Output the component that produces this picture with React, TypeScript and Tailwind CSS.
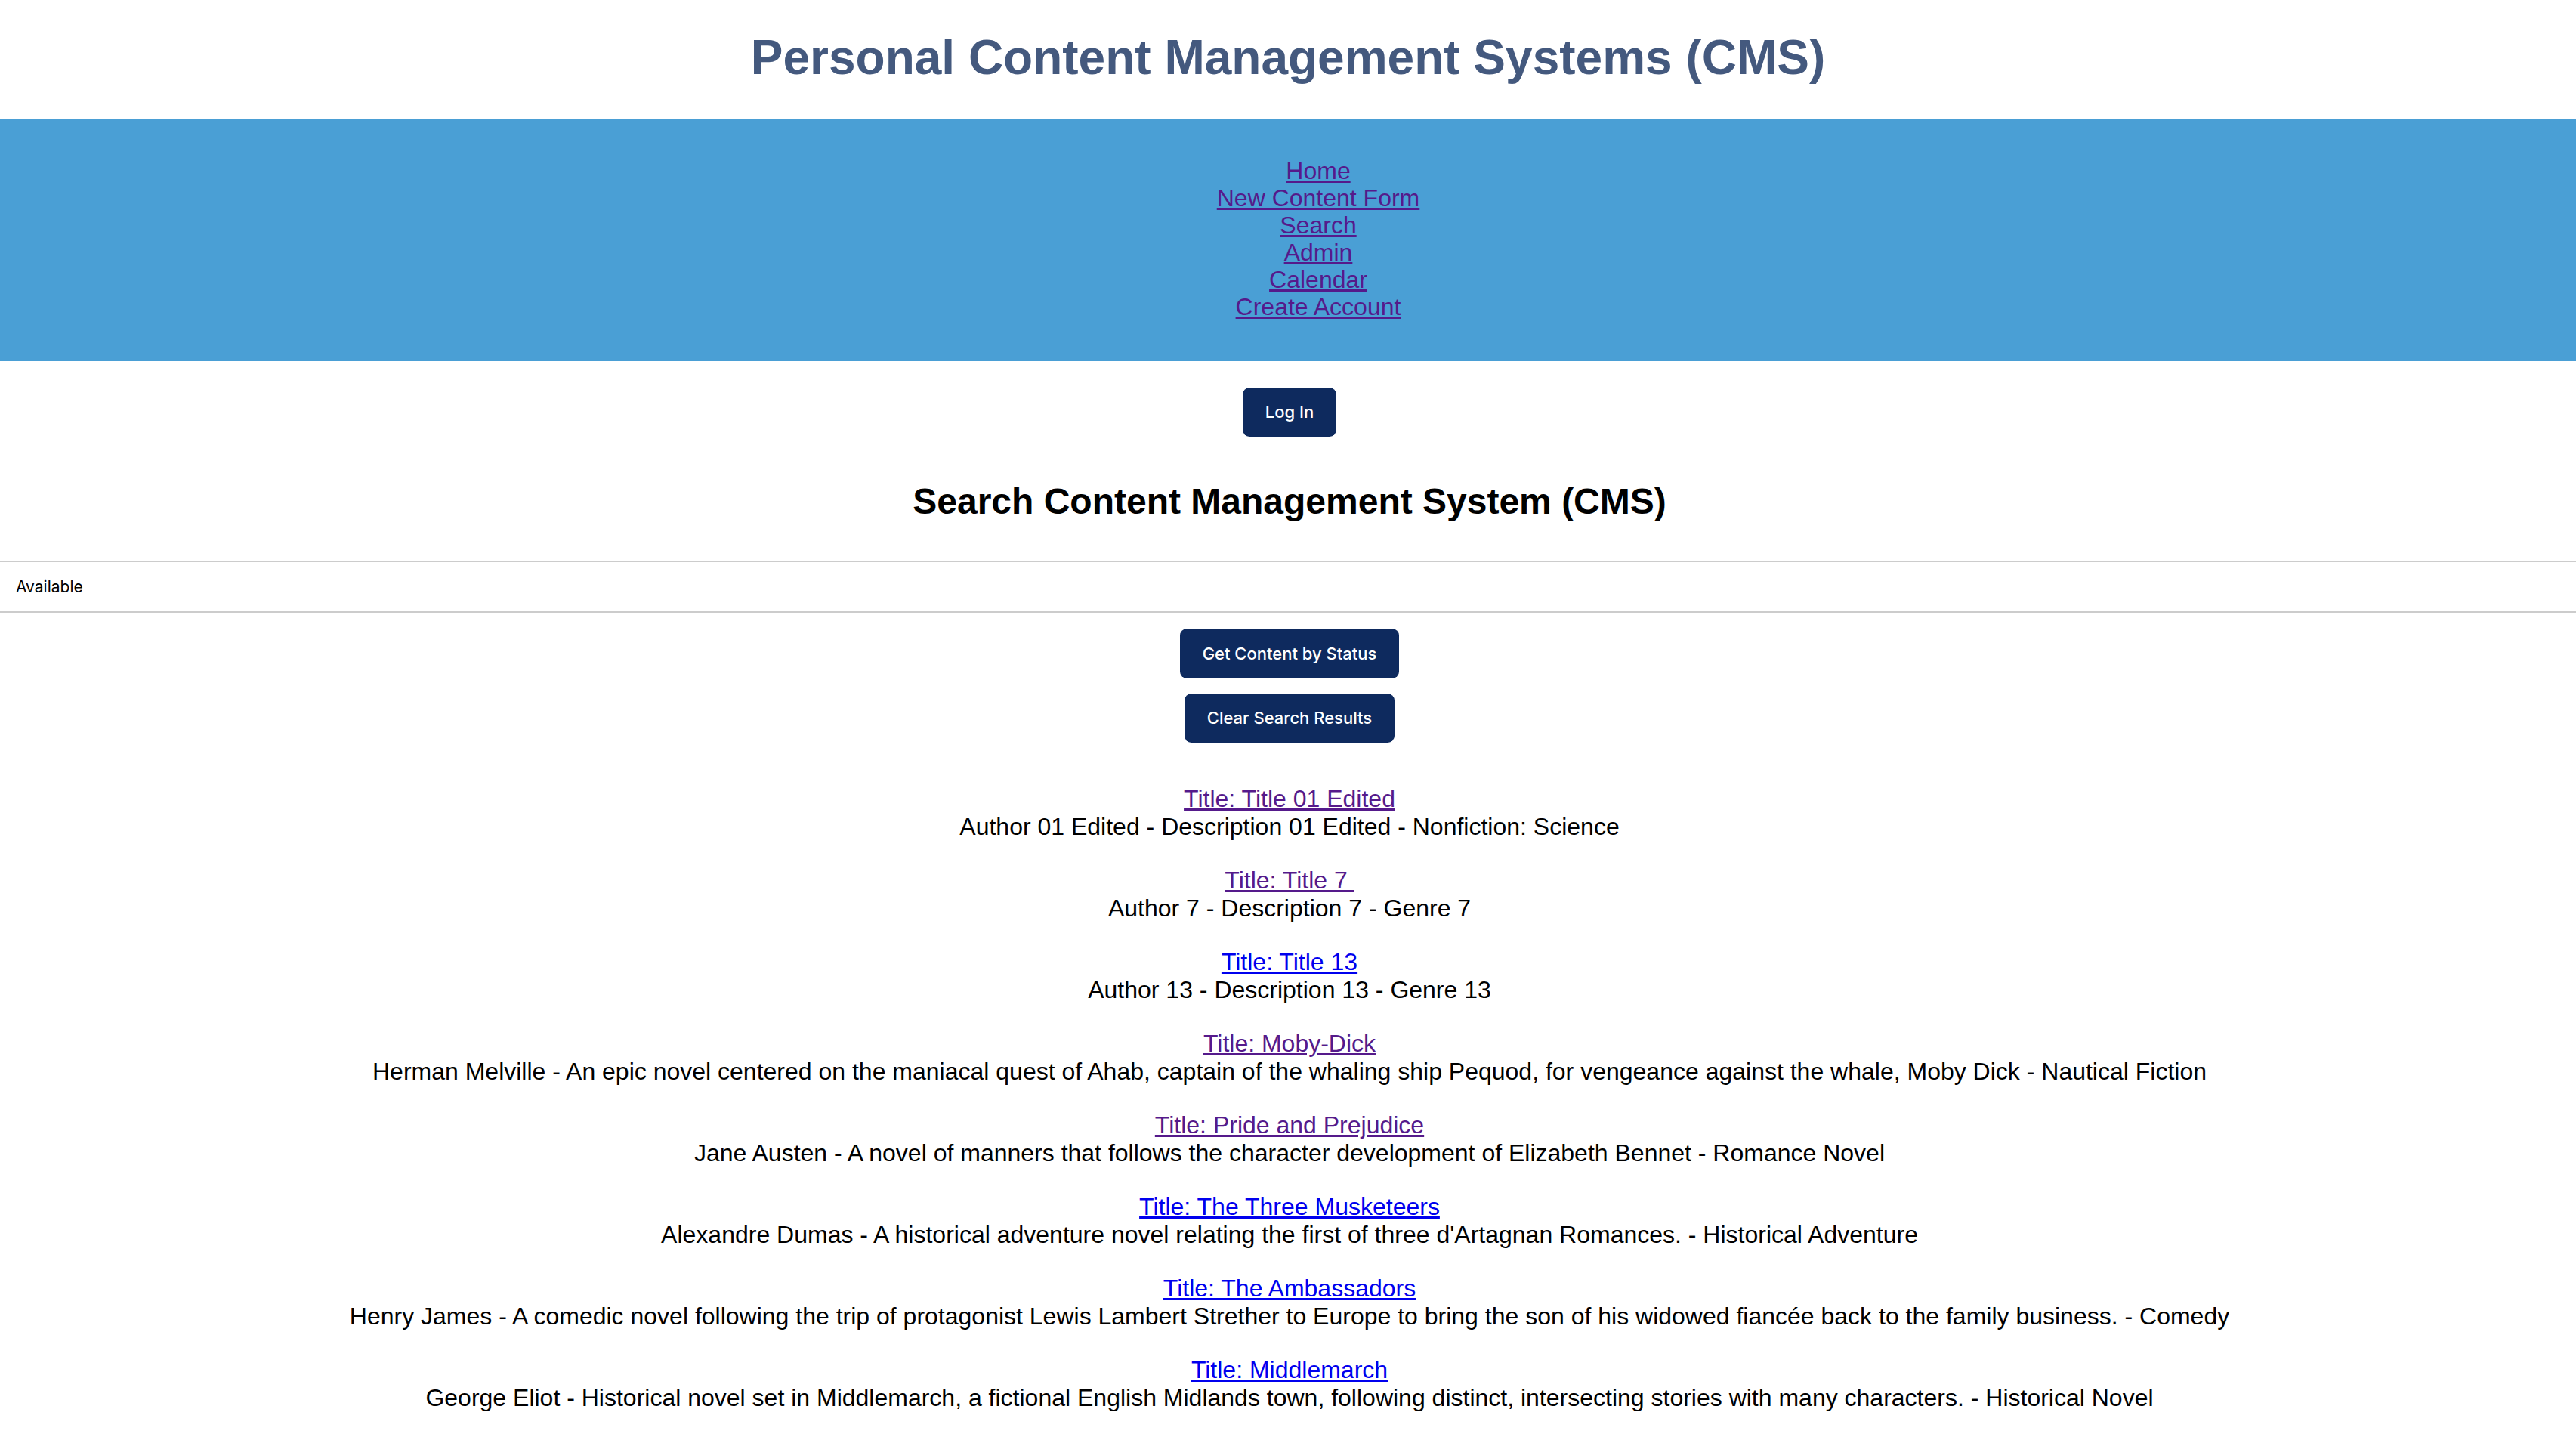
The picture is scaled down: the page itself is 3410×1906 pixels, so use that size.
import React from 'react';

type Result = {
  title: string;
  details: string;
  visited: boolean;
};

const navLinks = ['Home', 'New Content Form', 'Search', 'Admin', 'Calendar', 'Create Account'];

const results: Result[] = [
  { title: 'Title: Title 01 Edited', details: 'Author 01 Edited - Description 01 Edited - Nonfiction: Science', visited: true },
  { title: 'Title: Title 7\u00a0', details: 'Author 7 - Description 7 - Genre 7', visited: true },
  { title: 'Title: Title 13', details: 'Author 13 - Description 13 - Genre 13', visited: false },
  {
    title: 'Title: Moby-Dick',
    details:
      'Herman Melville - An epic novel centered on the maniacal quest of Ahab, captain of the whaling ship Pequod, for vengeance against the whale, Moby Dick - Nautical Fiction',
    visited: true,
  },
  {
    title: 'Title: Pride and Prejudice',
    details: 'Jane Austen - A novel of manners that follows the character development of Elizabeth Bennet - Romance Novel',
    visited: true,
  },
  {
    title: 'Title: The Three Musketeers',
    details: "Alexandre Dumas - A historical adventure novel relating the first of three d'Artagnan Romances. - Historical Adventure",
    visited: false,
  },
  {
    title: 'Title: The Ambassadors',
    details:
      'Henry James - A comedic novel following the trip of protagonist Lewis Lambert Strether to Europe to bring the son of his widowed fiancée back to the family business. - Comedy',
    visited: false,
  },
  {
    title: 'Title: Middlemarch',
    details:
      'George Eliot - Historical novel set in Middlemarch, a fictional English Midlands town, following distinct, intersecting stories with many characters. - Historical Novel',
    visited: false,
  },
];

const NavyButton: React.FC<{ label: string; className?: string }> = ({ label, className }) => (
  <button
    className={
      'bg-[#0e2a5e] text-white rounded-[9px] px-[30px] font-["Inter",sans-serif] font-medium text-[22px] leading-none ' +
      (className ?? '')
    }
  >
    {label}
  </button>
);

const App: React.FC = () => {
  return (
    <div className="min-h-screen bg-white text-black font-['Liberation_Sans',Arial,sans-serif]">
      <header>
        <h1 className="text-center text-[64px] font-bold leading-[1.15] text-[#44597e] pt-[40px] pb-[44px]">
          Personal Content Management Systems (CMS)
        </h1>
      </header>

      <nav className="bg-[#4a9fd5] pt-[50px] pb-[54px] pl-[80px]">
        <ul className="text-center text-[32px] leading-[36px]">
          {navLinks.map((link) => (
            <li key={link}>
              <a href="#" className="text-[#551a8b] underline">
                {link}
              </a>
            </li>
          ))}
        </ul>
      </nav>

      <main className="pl-[4px]">
        <div className="flex justify-center pt-[35px]">
          <NavyButton label="Log In" className="h-[65px]" />
        </div>

        <h2 className="text-center text-[48px] font-bold leading-[1.15] mt-[58px] mb-[51px]">
          Search Content Management System (CMS)
        </h2>

        <div className="-ml-[4px] h-[69px] border-y-2 border-[#cccccc] flex items-center px-[21px] font-['Inter',sans-serif] text-[21px]">
          Available
        </div>

        <div className="flex flex-col items-center gap-[20px] mt-[21px]">
          <NavyButton label="Get Content by Status" className="h-[66px]" />
          <NavyButton label="Clear Search Results" className="h-[65px]" />
        </div>

        {/* Search results */}
        <div className="mt-[56px] text-center text-[32px] leading-[1.15]">
          {results.map((r) => (
            <div key={r.title} className="mb-[34.5px]">
              <a href="#" className={r.visited ? 'text-[#551a8b] underline' : 'text-[#0000ee] underline'}>
                {r.title}
              </a>
              <p>{r.details}</p>
            </div>
          ))}
        </div>
      </main>
    </div>
  );
};

export default App;
